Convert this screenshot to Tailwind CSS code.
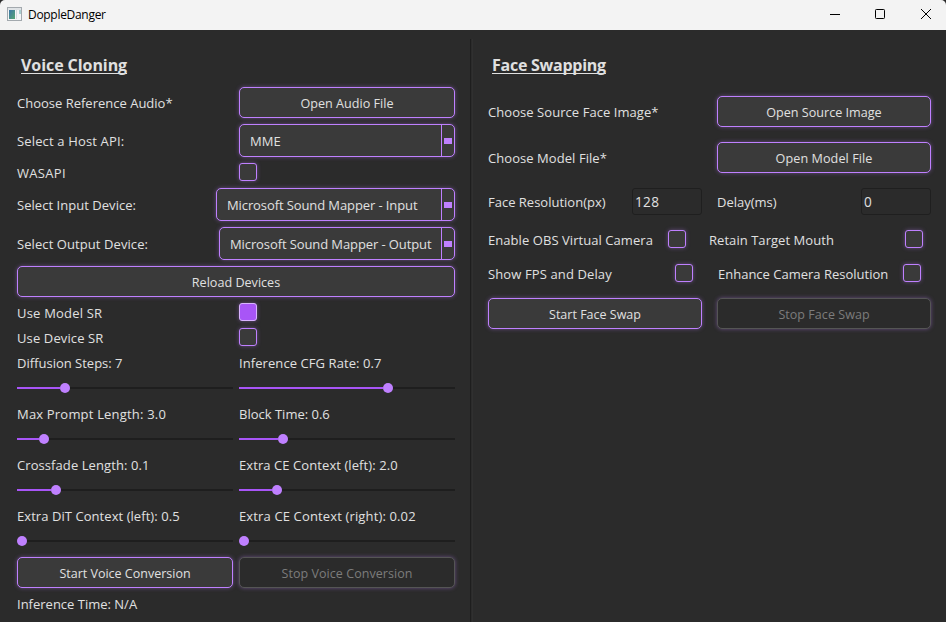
<!DOCTYPE html>
<html lang="en">
<head>
<meta charset="utf-8">
<title>DoppleDanger</title>
<script src="https://cdn.jsdelivr.net/npm/@tailwindcss/browser@4"></script>
</head>
<body class="w-[946px] h-[622px] overflow-hidden bg-[#2b2b2b] font-['Open_Sans','Noto_Sans',sans-serif] text-[13px] leading-5 text-[#e0e0e0] whitespace-nowrap flex flex-col">

<!-- Title bar -->
<header class="h-[30px] shrink-0 bg-[#f3f3f3] rounded-t-[5px] flex items-center justify-between pl-[7px] text-black">
  <div class="flex items-center gap-[6px]">
    <svg class="w-[15px] h-[14px] -mt-[3px]" viewBox="0 0 15 14" shape-rendering="crispEdges">
      <defs><linearGradient id="g" x1="0" y1="0" x2="1" y2="1"><stop offset="0" stop-color="#3c76a8"/><stop offset="1" stop-color="#57a773"/></linearGradient></defs>
      <rect x="0.5" y="0.5" width="14" height="13" fill="#f4f6f8" stroke="#a3a9ae"/>
      <rect x="1" y="1" width="13" height="2" fill="#dfe3e6"/>
      <rect x="2" y="3" width="6" height="9" fill="url(#g)"/>
      <rect x="9" y="3" width="1" height="9" fill="#d5dade"/>
      <rect x="12" y="3" width="2" height="4" fill="#a9cfd0"/>
    </svg>
    <span class="text-[12px] tracking-[-0.3px]">DoppleDanger</span>
  </div>
  <div class="flex items-center -mt-[2px]">
    <svg class="w-[46px] h-[28px]" viewBox="0 0 46 28" fill="none" stroke="#000"><path d="M22 14.5h10"/></svg>
    <svg class="w-[46px] h-[28px]" viewBox="0 0 46 28" fill="none" stroke="#000"><rect x="21.5" y="9.5" width="9" height="9" rx="0.8"/></svg>
    <svg class="w-[46px] h-[28px]" viewBox="0 0 46 28" fill="none" stroke="#000"><path d="M21 9l10 10M31 9l-10 10"/></svg>
  </div>
</header>

<main class="flex flex-1 min-h-0">
  <!-- Voice cloning -->
  <section class="w-[470px] shrink-0 pl-[17px] pr-[15px] pt-[21px] flex flex-col gap-[6px]">
    <h2 class="h-[30px] pl-1 font-bold text-[16px] leading-[28px] tracking-[-0.07px] underline decoration-1 underline-offset-[2px] [text-decoration-skip-ink:none]">Voice Cloning</h2>

    <div class="h-[31px] flex items-center justify-between">
      <span>Choose Reference Audio*</span>
      <button class="w-[216px] h-[31px] pt-[2px] rounded-[5px] border border-[#bf80ff] bg-[#3a3a3a] text-[12.6px] shadow-[0_0_4px_#bf80ff66]">Open Audio File</button>
    </div>

    <div class="h-[33px] flex items-center justify-between">
      <span class="tracking-[0.15px]">Select a Host API:</span>
      <div class="w-[216px] h-[33px] rounded-[5px] border border-[#bf80ff] bg-[#3a3a3a] shadow-[0_0_4px_#bf80ff66] flex items-center justify-between pl-[10px]">
        <span>MME</span>
        <i class="w-[13px] h-full border-l border-[#bf80ff] flex items-center justify-center"><b class="w-2 h-[6px] bg-[#bf80ff]"></b></i>
      </div>
    </div>

    <div class="h-[19px] flex items-start justify-between">
      <span class="tracking-[0.3px]">WASAPI</span>
      <div class="w-[216px]"><div class="size-[18px] rounded-[3px] border border-[#bf80ff] bg-[#3a3a3a] shadow-[0_0_4px_#bf80ff66]"></div></div>
    </div>

    <div class="h-[33px] flex items-center justify-between">
      <span class="tracking-[0.04px]">Select Input Device:</span>
      <div class="w-[239px] h-[33px] rounded-[5px] border border-[#bf80ff] bg-[#3a3a3a] shadow-[0_0_4px_#bf80ff66] flex items-center justify-between pl-[10px]">
        <span class="tracking-[-0.1px]">Microsoft Sound Mapper - Input</span>
        <i class="w-[13px] h-full border-l border-[#bf80ff] flex items-center justify-center"><b class="w-2 h-[6px] bg-[#bf80ff]"></b></i>
      </div>
    </div>

    <div class="h-[33px] flex items-center justify-between">
      <span class="tracking-[0.08px]">Select Output Device:</span>
      <div class="w-[236px] h-[33px] rounded-[5px] border border-[#bf80ff] bg-[#3a3a3a] shadow-[0_0_4px_#bf80ff66] flex items-center justify-between pl-[10px]">
        <span class="tracking-[-0.1px]">Microsoft Sound Mapper - Output</span>
        <i class="w-[13px] h-full border-l border-[#bf80ff] flex items-center justify-center"><b class="w-2 h-[6px] bg-[#bf80ff]"></b></i>
      </div>
    </div>

    <button class="h-[31px] pt-[2px] rounded-[5px] border border-[#bf80ff] bg-[#3a3a3a] text-[12.6px] shadow-[0_0_4px_#bf80ff66]">Reload Devices</button>

    <div class="h-[19px] flex items-start justify-between">
      <span class="tracking-[0.2px]">Use Model SR</span>
      <div class="w-[216px]"><div class="size-[18px] rounded-[3px] border border-[#d9b3ff] bg-[#a855f7] shadow-[0_0_4px_#bf80ff66]"></div></div>
    </div>
    <div class="h-[19px] flex items-start justify-between">
      <span class="tracking-[0.12px]">Use Device SR</span>
      <div class="w-[216px]"><div class="size-[18px] rounded-[3px] border border-[#bf80ff] bg-[#3a3a3a] shadow-[0_0_4px_#bf80ff66]"></div></div>
    </div>

    <div class="grid grid-cols-2 gap-[6px]">
      <span>Diffusion Steps: 7</span>
      <span class="tracking-[0.08px]">Inference CFG Rate: 0.7</span>
      <div class="h-[19px] flex items-center pb-px">
        <i class="h-[2px] w-[43px] bg-[#a855f7]"></i><i class="size-[10px] rounded-full bg-[#bf80ff]"></i><i class="h-[2px] flex-1 bg-[#1e1e1e]"></i>
      </div>
      <div class="h-[19px] flex items-center pb-px">
        <i class="h-[2px] w-[144px] bg-[#a855f7]"></i><i class="size-[10px] rounded-full bg-[#bf80ff]"></i><i class="h-[2px] flex-1 bg-[#1e1e1e]"></i>
      </div>
      <span class="tracking-[0.19px]">Max Prompt Length: 3.0</span>
      <span>Block Time: 0.6</span>
      <div class="h-[19px] flex items-center pb-px">
        <i class="h-[2px] w-[22px] bg-[#a855f7]"></i><i class="size-[10px] rounded-full bg-[#bf80ff]"></i><i class="h-[2px] flex-1 bg-[#1e1e1e]"></i>
      </div>
      <div class="h-[19px] flex items-center pb-px">
        <i class="h-[2px] w-[39px] bg-[#a855f7]"></i><i class="size-[10px] rounded-full bg-[#bf80ff]"></i><i class="h-[2px] flex-1 bg-[#1e1e1e]"></i>
      </div>
      <span class="tracking-[0.08px]">Crossfade Length: 0.1</span>
      <span class="tracking-[0.08px]">Extra CE Context (left): 2.0</span>
      <div class="h-[19px] flex items-center pb-px">
        <i class="h-[2px] w-[34px] bg-[#a855f7]"></i><i class="size-[10px] rounded-full bg-[#bf80ff]"></i><i class="h-[2px] flex-1 bg-[#1e1e1e]"></i>
      </div>
      <div class="h-[19px] flex items-center pb-px">
        <i class="h-[2px] w-[33px] bg-[#a855f7]"></i><i class="size-[10px] rounded-full bg-[#bf80ff]"></i><i class="h-[2px] flex-1 bg-[#1e1e1e]"></i>
      </div>
      <span class="tracking-[0.06px]">Extra DiT Context (left): 0.5</span>
      <span class="tracking-[0.14px]">Extra CE Context (right): 0.02</span>
      <div class="h-[19px] flex items-center pb-px">
        <i class="size-[10px] rounded-full bg-[#bf80ff]"></i><i class="h-[2px] flex-1 bg-[#1e1e1e]"></i>
      </div>
      <div class="h-[19px] flex items-center pb-px">
        <i class="size-[10px] rounded-full bg-[#bf80ff]"></i><i class="h-[2px] flex-1 bg-[#1e1e1e]"></i>
      </div>
      <button class="h-[31px] pt-[2px] rounded-[5px] border border-[#bf80ff] bg-[#3a3a3a] text-[12.5px] shadow-[0_0_4px_#bf80ff66]">Start Voice Conversion</button>
      <button class="h-[31px] pt-[2px] rounded-[5px] border border-[#555] bg-[#2b2b2b] text-[#7c7c7c] text-[12.5px] tracking-[0.05px] shadow-[0_0_4px_#bf80ff66]" disabled>Stop Voice Conversion</button>
    </div>
    <span>Inference Time: N/A</span>
  </section>

  <!-- Divider -->
  <div class="w-[3px] mt-[9px] shrink-0 border-l border-[#1e1e1e] border-r border-r-[#303030]"></div>

  <!-- Face swapping -->
  <section class="flex-1 pl-[15px] pr-[15px] pt-[21px] flex flex-col">
    <h2 class="h-[30px] pl-1 font-bold text-[16px] leading-[28px] tracking-[-0.25px] underline decoration-1 underline-offset-[2px] [text-decoration-skip-ink:none]">Face Swapping</h2>

    <div class="mt-[15px] h-[31px] flex items-center justify-between">
      <span class="tracking-[0.06px]">Choose Source Face Image*</span>
      <button class="w-[214px] h-[31px] pt-[2px] rounded-[5px] border border-[#bf80ff] bg-[#3a3a3a] text-[12.6px] shadow-[0_0_4px_#bf80ff66]">Open Source Image</button>
    </div>
    <div class="mt-[15px] h-[31px] flex items-center justify-between">
      <span class="tracking-[0.06px]">Choose Model File*</span>
      <button class="w-[214px] h-[31px] pt-[2px] rounded-[5px] border border-[#bf80ff] bg-[#3a3a3a] text-[12.6px] tracking-[0.08px] shadow-[0_0_4px_#bf80ff66]">Open Model File</button>
    </div>

    <div class="mt-[15px] h-[27px] grid grid-cols-2 gap-[15px]">
      <div class="flex items-center justify-between">
        <span>Face Resolution(px)</span>
        <div class="w-[70px] h-[27px] rounded-[3px] border border-[#1f1f1f] flex items-center pl-[2px] text-[13.6px] tracking-[0.3px]">128</div>
      </div>
      <div class="flex items-center justify-between">
        <span>Delay(ms)</span>
        <div class="w-[70px] h-[27px] rounded-[3px] border border-[#1f1f1f] flex items-center pl-[2px] text-[13.6px]">0</div>
      </div>
    </div>

    <div class="mt-[15px] h-[18px] flex items-center">
      <span class="w-[180px] pt-[2px] tracking-[0.06px]">Enable OBS Virtual Camera</span>
      <div class="size-[18px] rounded-[3px] border border-[#bf80ff] bg-[#3a3a3a] shadow-[0_0_4px_#bf80ff66]"></div>
      <span class="ml-[23px] w-[196px] pt-[2px] tracking-[0.05px]">Retain Target Mouth</span>
      <div class="size-[18px] rounded-[3px] border border-[#bf80ff] bg-[#3a3a3a] shadow-[0_0_4px_#bf80ff66]"></div>
    </div>
    <div class="mt-[16px] h-[18px] flex items-center">
      <span class="w-[187px] pt-[2px] tracking-[0.12px]">Show FPS and Delay</span>
      <div class="size-[18px] rounded-[3px] border border-[#bf80ff] bg-[#3a3a3a] shadow-[0_0_4px_#bf80ff66]"></div>
      <span class="ml-[25px] w-[185px] pt-[2px]">Enhance Camera Resolution</span>
      <div class="size-[18px] rounded-[3px] border border-[#bf80ff] bg-[#3a3a3a] shadow-[0_0_4px_#bf80ff66]"></div>
    </div>

    <div class="mt-[16px] grid grid-cols-2 gap-[15px]">
      <button class="h-[31px] pt-[2px] rounded-[5px] border border-[#bf80ff] bg-[#3a3a3a] text-[12.5px] shadow-[0_0_4px_#bf80ff66]">Start Face Swap</button>
      <button class="h-[31px] pt-[2px] rounded-[5px] border border-[#555] bg-[#2b2b2b] text-[#7c7c7c] text-[12.5px] tracking-[0.05px] shadow-[0_0_4px_#bf80ff66]" disabled>Stop Face Swap</button>
    </div>
  </section>
</main>
</body>
</html>
